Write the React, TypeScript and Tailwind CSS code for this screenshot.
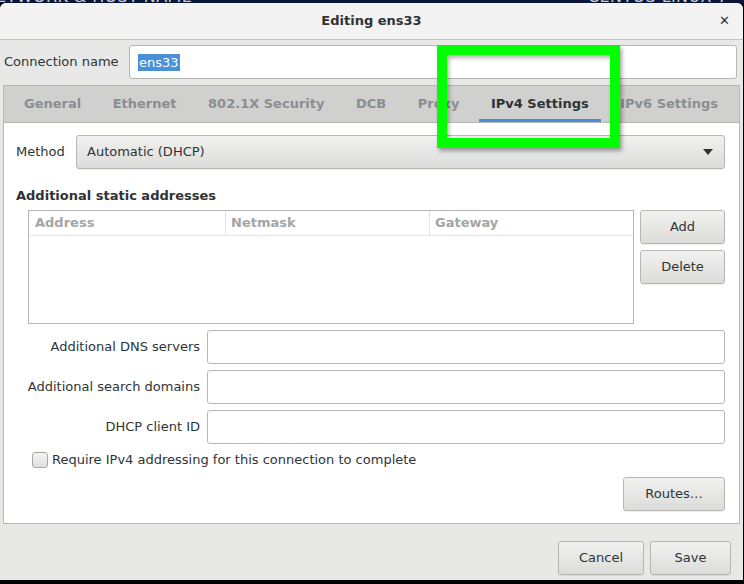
import React from "react";

const TABS = ["General", "Ethernet", "802.1X Security", "DCB", "Proxy", "IPv4 Settings", "IPv6 Settings"];

const btn =
  "flex items-center rounded-[3px] border border-[#b6b6b3] bg-gradient-to-b from-[#f1f1f0] to-[#dcdcda] text-[#2e3436] shadow-[0_1px_0_rgba(0,0,0,0.06)]";

function Entry() {
  return <div className="h-[34px] rounded-[3px] border border-[#b6b6b3] bg-white" />;
}

export default function App() {
  return (
    <div
      className="relative w-[744px] h-[584px] overflow-hidden bg-black text-[13px] text-[#2e3436]"
      style={{ fontFamily: '"DejaVu Sans", "Liberation Sans", sans-serif' }}
    >
      {/* desktop strip behind the dialog */}
      <div className="relative h-[3px] shrink-0 overflow-hidden bg-[#0b1736]">
        <span className="absolute left-[-4px] top-[-11px] text-[16px] leading-none tracking-wide text-[#c9cfdb]">ETWORK &amp; HOST NAME</span>
        <span className="absolute left-[588px] top-[-11px] text-[16px] leading-none tracking-wide text-[#c9cfdb]">CENTOS LINUX 7 INSTALLATIO</span>
      </div>

      <div className="mr-[1px] flex h-[577px] flex-col rounded-t-[6px] bg-[#e8e8e7]">
        {/* title bar */}
        <div className="relative flex h-[37px] shrink-0 items-center justify-center rounded-t-[6px] border-b border-[#c4c4c2] bg-[#f3f3f3]">
          <span className="font-bold">Editing ens33</span>
          <span className="absolute right-[13px] top-[11px] text-[13px] font-bold leading-none">✕</span>
        </div>

        {/* connection name */}
        <div className="flex shrink-0 items-center pl-[4px] pr-[6px] pt-[5px]">
          <span className="w-[125px]">Connection name</span>
          <div className="flex h-[34px] flex-1 items-center rounded-[3px] border border-[#b6b6b3] bg-white pl-[8px]">
            <span className="bg-[#4a90d9] px-[1px] leading-[17px] text-white">ens33</span>
          </div>
        </div>

        {/* notebook */}
        <div className="mx-[3px] mt-[6px] flex h-[439px] shrink-0 flex-col border border-[#b6b6b3] bg-white">
          <div className="flex h-[37px] shrink-0 items-stretch gap-[7.5px] border-b border-[#b6b6b3] bg-[#d0d0cf] pl-[8px] font-bold">
            {TABS.map((t) => {
              const active = t === "IPv4 Settings";
              return (
                <div
                  key={t}
                  className={`flex items-center whitespace-nowrap border-b-[3px] px-[12px] pt-[2px] ${
                    active ? "border-[#4a90d9] text-[#2e3436]" : "border-transparent text-[#8b8e8f]"
                  }`}
                >
                  {t}
                </div>
              );
            })}
          </div>

          <div className="flex flex-col pl-[12px] pr-[14px] pt-[12px]">
            {/* method */}
            <div className="flex items-center">
              <span className="w-[60px]">Method</span>
              <div className={`${btn} h-[34px] flex-1 justify-between pl-[10px] pr-[11px]`}>
                <span>Automatic (DHCP)</span>
                <svg width="10" height="6" viewBox="0 0 10 6">
                  <path d="M0 0h10L5 6z" fill="#2e3436" />
                </svg>
              </div>
            </div>

            <div className="mt-[19px] leading-[16px] font-bold">Additional static addresses</div>

            <div className="mt-[6px] flex gap-[6px] pl-[12px]">
              <div className="h-[114px] w-[606px] border border-[#b6b6b3] bg-white">
                <div className="grid h-[25px] grid-cols-[197px_204px_1fr] border-b border-[#e4e4e3] font-bold text-[#a4a6a6]">
                  <div className="flex items-center border-r border-[#e4e4e3] pl-[6px]">Address</div>
                  <div className="flex items-center border-r border-[#e4e4e3] pl-[5px]">Netmask</div>
                  <div className="flex items-center pl-[5px]">Gateway</div>
                </div>
              </div>
              <div className="flex flex-col gap-[6px]">
                <div className={`${btn} h-[34px] w-[85px] justify-center`}>Add</div>
                <div className={`${btn} h-[34px] w-[85px] justify-center`}>Delete</div>
              </div>
            </div>

            {/* extra fields */}
            <div className="mt-[6px] grid grid-cols-[184px_1fr] items-center gap-x-[7px] gap-y-[6px]">
              <span className="text-right">Additional DNS servers</span>
              <Entry />
              <span className="text-right">Additional search domains</span>
              <Entry />
              <span className="text-right">DHCP client ID</span>
              <Entry />
            </div>

            <label className="ml-[16px] mt-[8px] flex h-[16px] items-center gap-[4px]">
              <span className="h-[16px] w-[16px] rounded-[3px] border border-[#a8a8a6] bg-gradient-to-b from-[#f4f4f3] to-[#e0e0df]" />
              <span>Require IPv4 addressing for this connection to complete</span>
            </label>

            <div className="mt-[9px] flex justify-end">
              <div className={`${btn} h-[34px] w-[102px] justify-center`}>Routes…</div>
            </div>
          </div>
        </div>

        {/* dialog buttons */}
        <div className="mt-[17px] flex shrink-0 justify-end gap-[6px] pr-[12px]">
          <div className={`${btn} h-[34px] w-[86px] justify-center`}>Cancel</div>
          <div className={`${btn} h-[34px] w-[81px] justify-center`}>Save</div>
        </div>
      </div>

      {/* highlight box drawn over the screenshot */}
      <div className="absolute left-[437px] top-[45px] h-[103px] w-[183px] border-[10px] border-[#00ff00] shadow-[2px_3px_4px_rgba(0,0,0,0.35),inset_2px_3px_4px_rgba(0,0,0,0.3)]" />
    </div>
  );
}
